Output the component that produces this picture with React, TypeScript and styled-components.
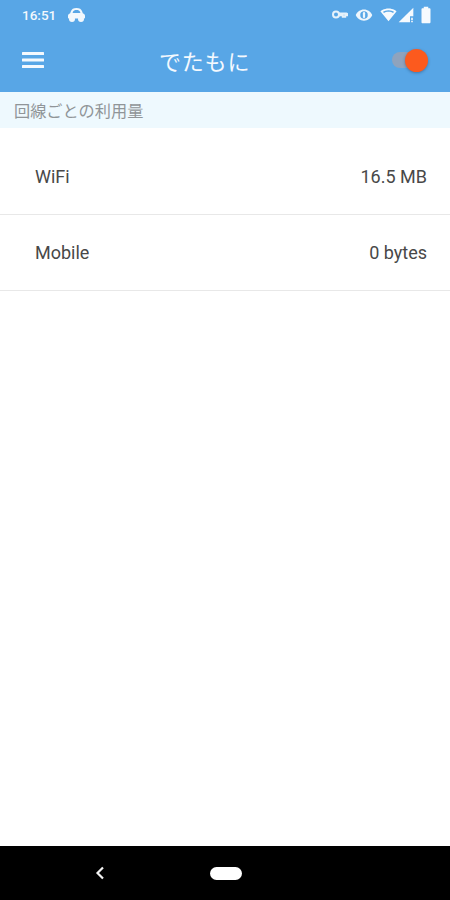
import styled, { createGlobalStyle } from 'styled-components';

const GlobalStyle = createGlobalStyle`
  html, body {
    margin: 0;
    padding: 0;
    background: #fff;
  }
  body {
    font-family: Roboto, "Noto Sans CJK JP", sans-serif;
  }
`;

const Page = styled.div`
  display: flex;
  flex-direction: column;
  width: 450px;
  height: 900px;
  overflow: hidden;
`;

const AppBar = styled.header`
  display: flex;
  flex-direction: column;
  height: 92px;
  background: #58a6e6;
  color: #fff;
  flex: none;
`;

const StatusBar = styled.div`
  display: flex;
  align-items: center;
  height: 30px;
  padding: 0 15.5px 1px 22px;
  box-sizing: border-box;
`;

const Clock = styled.span`
  font-size: 13.5px;
  font-weight: 500;
  color: #f2f8fd;
  margin-right: 12px;
`;

const StatusIcons = styled.div`
  display: flex;
  align-items: center;
  margin-left: auto;
`;

const IconSlot = styled.span<{ $gap: number }>`
  display: flex;
  margin-left: ${(p) => p.$gap}px;
`;

const Toolbar = styled.div`
  display: flex;
  align-items: center;
  flex: 1;
  padding: 0 20px 2px 22px;
`;

const Title = styled.h1`
  margin: 0 0 0 115px;
  font-size: 22px;
  font-weight: 400;
  letter-spacing: 0.8px;
  color: #f4f9fe;
  font-family: "Noto Sans CJK JP", sans-serif;
`;

const Toggle = styled.div`
  position: relative;
  width: 36px;
  height: 16px;
  border-radius: 8px;
  background: #8fa3bd;
  margin: 0 2px 0 auto;
`;

const Knob = styled.div`
  position: absolute;
  right: 0;
  top: -3.5px;
  width: 23px;
  height: 23px;
  border-radius: 50%;
  background: #fc5a1e;
  box-shadow: 0 1px 3px rgba(40, 60, 90, 0.45);
`;

const SectionLabel = styled.div`
  display: flex;
  align-items: center;
  height: 36px;
  padding-left: 14px;
  background: #eef9fe;
  color: #909598;
  font-size: 16.2px;
  font-family: "Noto Sans CJK JP", sans-serif;
  flex: none;
`;

const List = styled.div`
  display: flex;
  flex-direction: column;
  flex: 1;
  background: #fff;
`;

const Row = styled.div<{ $height: number; $top: number }>`
  display: flex;
  align-items: center;
  justify-content: space-between;
  box-sizing: border-box;
  height: ${(p) => p.$height}px;
  padding: ${(p) => p.$top}px 23px 0 35px;
  border-bottom: 1.5px solid #e8e8e8;
  font-size: 18px;
  color: #484848;
`;

const NavBar = styled.nav`
  display: flex;
  align-items: center;
  height: 54px;
  background: #000;
  padding-left: 95px;
  gap: 105px;
  flex: none;
`;

const HomePill = styled.div`
  width: 32px;
  height: 13px;
  border-radius: 7px;
  background: #fff;
`;

const CarIcon = () => (
  <svg width="17" height="14" viewBox="0 0 17 14" fill="#f2f8fd">
    <path
      fillRule="evenodd"
      d="M8.500 0C5.500 0 3.600 1.200 2.800 3.400L2.200 5.200C.9 5.600 0 6.500 0 7.800v1.700c0 .7.400 1 1 1h15c.6 0 1-.3 1-1V7.800c0-1.300-.9-2.200-2.200-2.600l-.6-1.800C13.400 1.200 11.500 0 8.500 0zM4.600 5 5 3.700C5.500 2.500 6.600 1.900 8.500 1.900s3 .6 3.500 1.800L12.400 5H4.600z"
    />
    <circle cx="4" cy="11" r="3" />
    <circle cx="13" cy="11" r="3" />
  </svg>
);

const KeyIcon = () => (
  <svg width="16" height="9" viewBox="0 0 16 9" fill="none" stroke="#e6f2fb" strokeWidth="2">
    <circle cx="4" cy="4.500" r="3" />
    <path d="M7 3.400h7.500a.7.700 0 0 1 .7.700v1.200h-2v1.400h-2.400V5.300H7" />
  </svg>
);

const EyeIcon = () => (
  <svg width="18" height="18" viewBox="0 0 24 24" fill="#eef6fd">
    <path d="M12 4.500C7 4.500 2.700 7.600 1 12c1.700 4.400 6 7.500 11 7.500s9.300-3.100 11-7.500c-1.700-4.400-6-7.500-11-7.500zM12 17a5 5 0 1 1 0-10 5 5 0 0 1 0 10z" />
    <rect x="10.500" y="8" width="3" height="8" rx="1.500" />
  </svg>
);

const WifiIcon = () => (
  <svg width="17" height="17" viewBox="0 0 24 24" fill="#f6fafe">
    <path d="M12 21.500L.5 7.500C1 7.100 5.400 3.500 12 3.500s11 3.600 11.500 4L12 21.500zM5.500 9.800c1.600-1 3.800-1.800 6.500-1.800s4.900.8 6.500 1.800l1.200-1.600C18 7.100 15.400 6 12 6S6 7.100 4.300 8.200l1.200 1.600z" />
  </svg>
);

const SignalIcon = () => (
  <svg width="16" height="16" viewBox="0 0 24 24" fill="#f6fafe">
    <path d="M1 23L23 1v13h-5v9H1z" />
    <path d="M19.500 16h3v4h-3zM19.500 21h3v2h-3z" fill="#dbe9f6" />
  </svg>
);

const BatteryIcon = () => (
  <svg width="18" height="18" viewBox="0 0 24 24" fill="#f6fafe">
    <path d="M16.700 3H15V1H9v2H7.300C6.600 3 6 3.600 6 4.300v17.300C6 22.400 6.600 23 7.300 23h9.300c.8 0 1.400-.6 1.400-1.300V4.300C18 3.600 17.400 3 16.700 3z" />
  </svg>
);

const MenuIcon = () => (
  <svg width="22" height="16" viewBox="0 0 22 16" fill="#f4f9fe">
    <rect x="0" y="0" width="22" height="3" rx="0.500" />
    <rect x="0" y="6.500" width="22" height="3" rx="0.500" />
    <rect x="0" y="13" width="22" height="3" rx="0.500" />
  </svg>
);

const BackIcon = () => (
  <svg width="10" height="14" viewBox="0 0 10 14" fill="none" stroke="#f2f2f2" strokeWidth="2.200">
    <path d="M8 1.500L2.500 7 8 12.500" />
  </svg>
);

const App = () => {
  return (
    <Page>
      <GlobalStyle />
      <AppBar>
        <StatusBar>
          <Clock>16:51</Clock>
          <CarIcon />
          <StatusIcons>
            <IconSlot $gap={0}>
              <KeyIcon />
            </IconSlot>
            <IconSlot $gap={6.5}>
              <EyeIcon />
            </IconSlot>
            <IconSlot $gap={7}>
              <WifiIcon />
            </IconSlot>
            <IconSlot $gap={0.7}>
              <SignalIcon />
            </IconSlot>
            <IconSlot $gap={3}>
              <BatteryIcon />
            </IconSlot>
          </StatusIcons>
        </StatusBar>
        <Toolbar>
          <MenuIcon />
          <Title>でたもに</Title>
          <Toggle>
            <Knob />
          </Toggle>
        </Toolbar>
      </AppBar>
      <SectionLabel>回線ごとの利用量</SectionLabel>
      <List>
        <Row $height={86.5} $top={12}>
          <span>WiFi</span>
          <span>16.5 MB</span>
        </Row>
        <Row $height={76} $top={0}>
          <span>Mobile</span>
          <span>0 bytes</span>
        </Row>
      </List>
      <NavBar>
        <BackIcon />
        <HomePill />
      </NavBar>
    </Page>
  );
};

export default App;
